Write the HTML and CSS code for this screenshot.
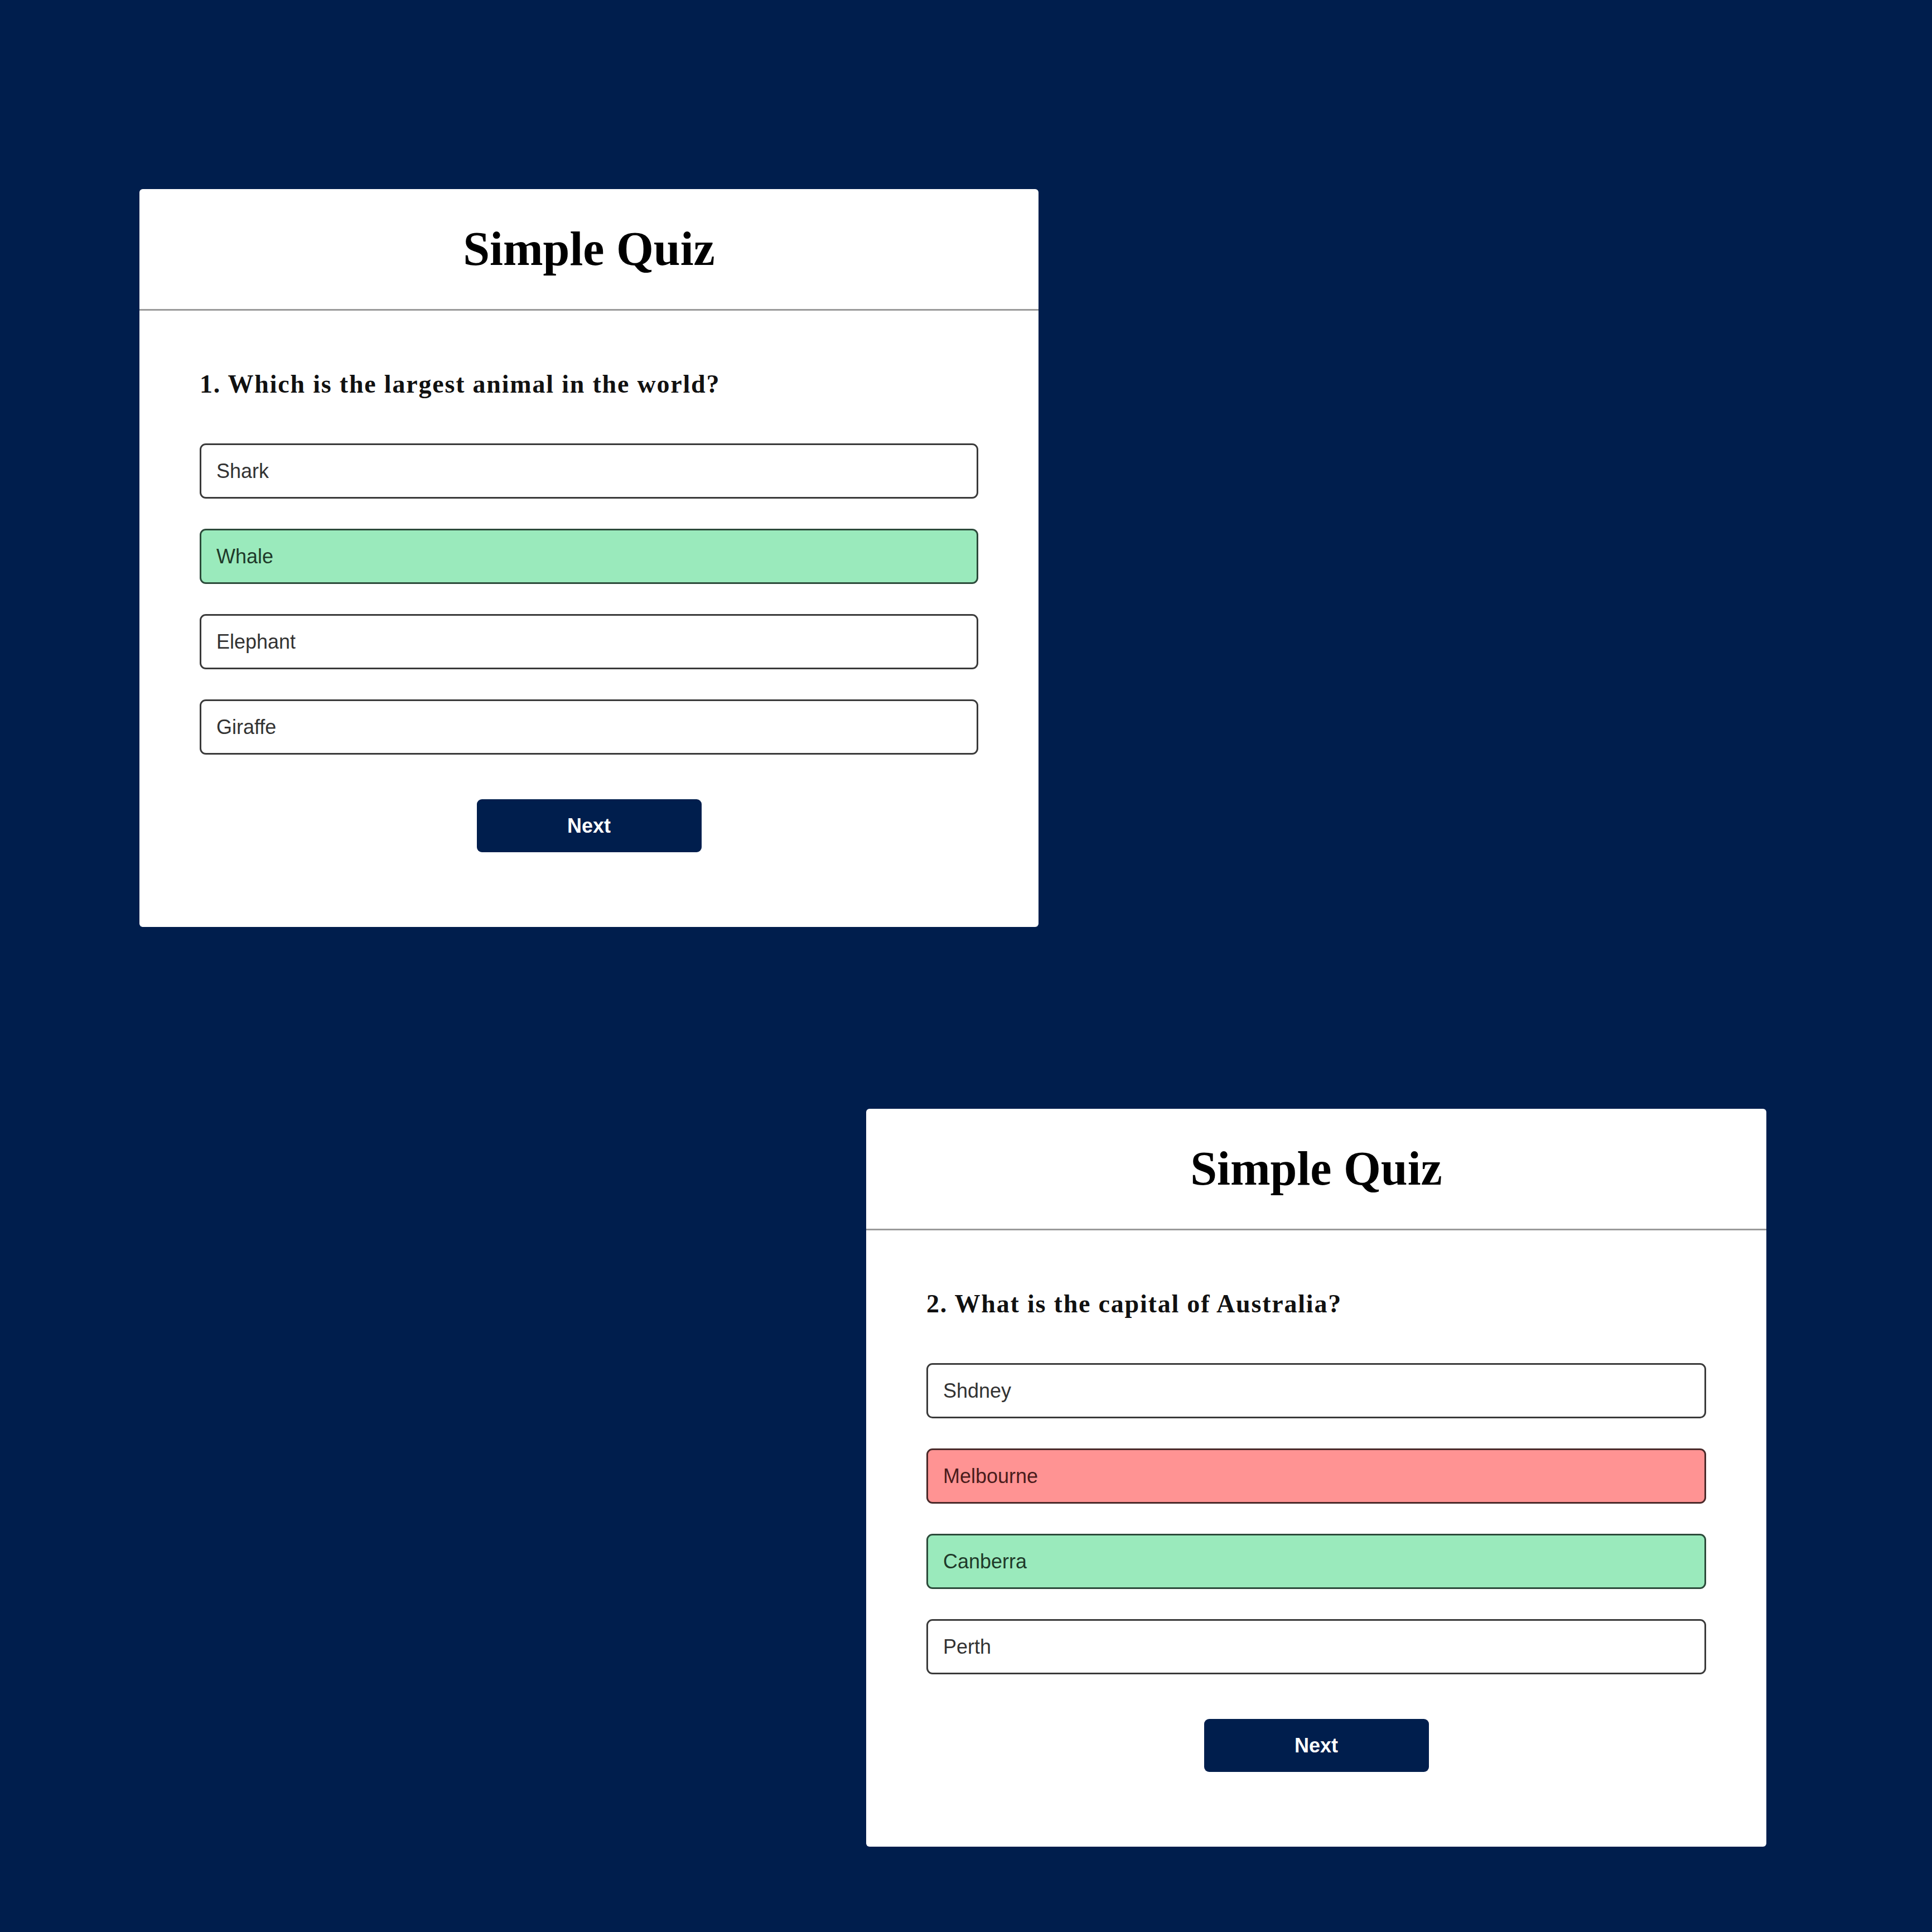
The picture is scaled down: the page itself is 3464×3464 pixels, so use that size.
FILE: index.html
```html
<!DOCTYPE html>
<html lang="en">
<head>
<meta charset="utf-8">
<title>Simple Quiz</title>
<link rel="stylesheet" href="styles.css">
</head>
<body>
<main class="page">
  <section class="card card-first">
    <h1 class="card-title">Simple Quiz</h1>
    <div class="card-body">
      <h2 class="question">1. Which is the largest animal in the world?</h2>
      <div class="answers">
        <button class="answer">Shark</button>
        <button class="answer answer-correct">Whale</button>
        <button class="answer">Elephant</button>
        <button class="answer">Giraffe</button>
      </div>
      <button class="next-btn">Next</button>
    </div>
  </section>
  <section class="card card-second">
    <h1 class="card-title">Simple Quiz</h1>
    <div class="card-body">
      <h2 class="question">2. What is the capital of Australia?</h2>
      <div class="answers">
        <button class="answer">Shdney</button>
        <button class="answer answer-wrong">Melbourne</button>
        <button class="answer answer-correct">Canberra</button>
        <button class="answer">Perth</button>
      </div>
      <button class="next-btn">Next</button>
    </div>
  </section>
</main>
</body>
</html>
```
FILE: styles.css
```css
html, body {
  margin: 0;
  padding: 0;
  background: #001e4d;
}
.page {
  width: 3464px;
  min-height: 3464px;
  box-sizing: border-box;
  padding-top: 339px;
  display: flex;
  flex-direction: column;
  align-items: flex-start;
  gap: 326px;
}
.card {
  width: 1612px;
  background: #ffffff;
  border-radius: 6px;
  box-sizing: border-box;
}
.card-first { margin-left: 250px; }
.card-second { margin-left: 1553px; width: 1614px; }
.card-title {
  margin: 0;
  padding: 57px 0 58px;
  text-align: center;
  font-family: "Liberation Serif", "Times New Roman", serif;
  font-weight: bold;
  font-size: 86px;
  color: #000;
  border-bottom: 3px solid #9a9a9a;
}
.card-body {
  padding: 106px 108px 134px;
  display: flex;
  flex-direction: column;
}
.question {
  margin: 0;
  font-family: "Liberation Serif", "Times New Roman", serif;
  font-weight: bold;
  font-size: 46px;
  letter-spacing: 1.8px;
  color: #111;
  line-height: 52px;
}
.answers {
  margin-top: 80px;
  display: flex;
  flex-direction: column;
  gap: 54px;
}
.answer {
  display: block;
  width: 100%;
  height: 99px;
  box-sizing: border-box;
  margin: 0;
  padding: 0 0 0 27px;
  text-align: left;
  font-family: "Liberation Sans", Arial, sans-serif;
  font-size: 36px;
  color: #333;
  background: #ffffff;
  border: 3px solid #3a3a3a;
  border-radius: 11px;
}
.answer-correct {
  background: #9aeabc;
  border-color: #2c4a3a;
  color: #1f3a2a;
}
.answer-wrong {
  background: #ff9393;
  border-color: #4a2a2a;
  color: #4a1c1c;
}
.next-btn {
  align-self: center;
  margin-top: 80px;
  width: 403px;
  height: 95px;
  background: #001e4d;
  color: #ffffff;
  border: none;
  border-radius: 9px;
  font-family: "Liberation Sans", Arial, sans-serif;
  font-weight: bold;
  font-size: 36px;
}
```
